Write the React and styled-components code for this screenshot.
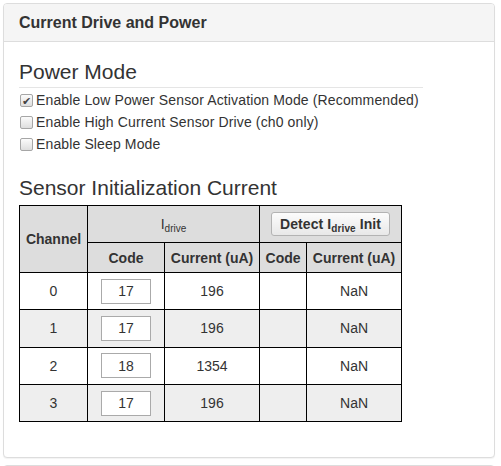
import React from "react";
import styled, { createGlobalStyle } from "styled-components";

const GlobalStyle = createGlobalStyle`
  html, body { margin: 0; padding: 0; background: #fff; }
  body {
    font-family: "Liberation Sans", Arial, Helvetica, sans-serif;
    font-size: 14px;
    line-height: 20px;
    color: #333;
  }
`;

const Page = styled.div`
  display: flex;
  flex-direction: column;
  gap: 7px;
  padding: 3px 6px 0 3px;
`;

const Panel = styled.section`
  background: #fff;
  border: 1px solid #ddd;
  border-radius: 4px;
  box-shadow: 0 1px 1px rgba(0, 0, 0, 0.05);
`;

const PanelHeading = styled.div`
  background: #f5f5f5;
  border-bottom: 1px solid #ddd;
  border-radius: 3px 3px 0 0;
  padding: 10px 15px;
`;

const PanelTitle = styled.h3`
  margin: 0;
  font-size: 16px;
  font-weight: bold;
  line-height: 17px;
  color: #333;
`;

const PanelBody = styled.div`
  padding: 15px 15px 15px;
`;

const Column = styled.div`
  width: 404px;
  margin-bottom: 20px;
`;

const Legend = styled.div`
  font-size: 21px;
  line-height: 30px;
  border-bottom: 1px solid #e5e5e5;
  margin: 0;
  color: #333;
`;

const CheckList = styled.div`
  display: flex;
  flex-direction: column;
  gap: 2px;
  margin-top: 2px;
`;

const CheckRow = styled.label`
  display: flex;
  align-items: center;
  height: 20px;
  line-height: 20px;
  letter-spacing: 0.13px;
  white-space: nowrap;
  cursor: pointer;
`;

const Check = styled.input.attrs({ type: "checkbox" })`
  appearance: none;
  -webkit-appearance: none;
  box-sizing: border-box;
  position: relative;
  width: 13px;
  height: 13px;
  margin: 0 3px 0 1px;
  border: 1px solid #a6a6a6;
  border-radius: 2px;
  background: linear-gradient(#fbfbfb, #dedede);
  flex: none;

  &:checked::after {
    content: "✔";
    position: absolute;
    left: 1px;
    top: -4px;
    font-size: 11px;
    line-height: 20px;
    color: #444;
    letter-spacing: 0;
  }
`;

const SectionTitle = styled.div`
  font-size: 21px;
  line-height: 30px;
  margin: 19px 0 2px;
  color: #333;
`;

const Table = styled.table`
  border-collapse: collapse;
  width: 383px;
  table-layout: fixed;
`;

const HeadRow = styled.tr`
  height: ${(p) => p.$h}px;
  background: #ddd;
`;

const Th = styled.th`
  border: 1px solid #000;
  padding: 0;
  text-align: center;
  vertical-align: middle;
  font-weight: bold;
  font-size: 14px;
  color: #333;
`;

const ThPlain = styled(Th)`
  font-weight: normal;
`;

const BodyRow = styled.tr`
  height: 37.3px;
  background: ${(p) => (p.$odd ? "#eee" : "#fff")};
`;

const Td = styled.td`
  border: 1px solid #000;
  padding: 0;
  text-align: center;
  vertical-align: middle;
  color: #333;
`;

const CodeInput = styled.input`
  box-sizing: border-box;
  width: 50px;
  height: 25px;
  border: 1px solid #aaa;
  padding: 0;
  text-align: center;
  font-family: inherit;
  font-size: 14px;
  color: #333;
  background: #fff;
  vertical-align: middle;
`;

const Button = styled.button`
  box-sizing: border-box;
  height: 24px;
  padding: 0 8px;
  border: 1px solid #b3b3b3;
  border-radius: 3px;
  background: linear-gradient(#fcfcfc, #e8e8e8);
  font-family: inherit;
  font-size: 14px;
  font-weight: bold;
  color: #333;
  line-height: 22px;
  letter-spacing: 0.1px;
  cursor: pointer;
`;

const Sub = styled.sub`
  font-size: 10px;
  line-height: 0;
  vertical-align: -3px;
`;

const rows = [
  { ch: 0, code: "17", cur: "196" },
  { ch: 1, code: "17", cur: "196" },
  { ch: 2, code: "18", cur: "1354" },
  { ch: 3, code: "17", cur: "196" },
];

export default function App() {
  return (
    <>
      <GlobalStyle />
      <Page>
        <Panel>
          <PanelHeading>
            <PanelTitle>Current Drive and Power</PanelTitle>
          </PanelHeading>
          <PanelBody>
            <Column>
              <Legend>Power Mode</Legend>
              <CheckList>
                <CheckRow>
                  <Check defaultChecked />
                  Enable Low Power Sensor Activation Mode (Recommended)
                </CheckRow>
                <CheckRow>
                  <Check />
                  Enable High Current Sensor Drive (ch0 only)
                </CheckRow>
                <CheckRow>
                  <Check />
                  Enable Sleep Mode
                </CheckRow>
              </CheckList>
              <SectionTitle>Sensor Initialization Current</SectionTitle>
              <Table>
                <colgroup>
                  <col style={{ width: 68 }} />
                  <col style={{ width: 77 }} />
                  <col style={{ width: 95 }} />
                  <col style={{ width: 47 }} />
                  <col style={{ width: 95 }} />
                </colgroup>
                <thead>
                  <HeadRow $h={37}>
                    <Th rowSpan={2}>Channel</Th>
                    <ThPlain colSpan={2}>
                      I<Sub>drive</Sub>
                    </ThPlain>
                    <Th colSpan={2}>
                      <Button type="button">
                        Detect I<Sub>drive</Sub> Init
                      </Button>
                    </Th>
                  </HeadRow>
                  <HeadRow $h={30}>
                    <Th>Code</Th>
                    <Th>Current (uA)</Th>
                    <Th>Code</Th>
                    <Th>Current (uA)</Th>
                  </HeadRow>
                </thead>
                <tbody>
                  {rows.map((r, i) => (
                    <BodyRow key={r.ch} $odd={i % 2 === 1}>
                      <Td>{r.ch}</Td>
                      <Td>
                        <CodeInput defaultValue={r.code} />
                      </Td>
                      <Td>{r.cur}</Td>
                      <Td></Td>
                      <Td>NaN</Td>
                    </BodyRow>
                  ))}
                </tbody>
              </Table>
            </Column>
          </PanelBody>
        </Panel>
        <Panel>
          <PanelHeading>
            <PanelTitle>&nbsp;</PanelTitle>
          </PanelHeading>
        </Panel>
      </Page>
    </>
  );
}
